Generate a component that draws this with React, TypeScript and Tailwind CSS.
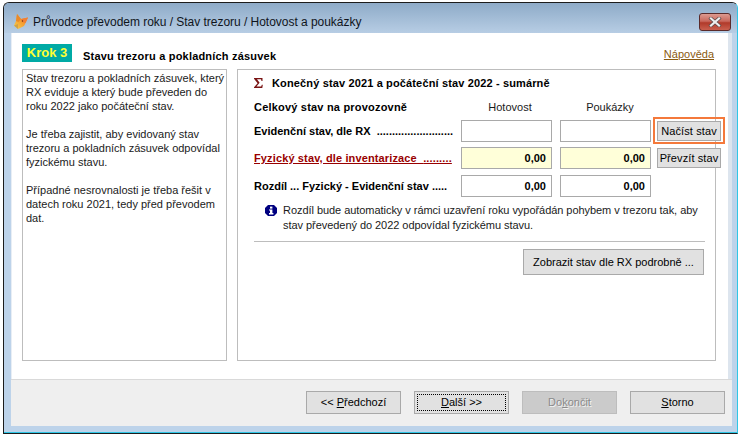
import type { ReactNode } from 'react';

const sans = 'font-["Liberation_Sans",Arial,sans-serif]';

function FoxIcon() {
  return (
    <svg width="16" height="17" viewBox="0 0 16 17" className="shrink-0">
      <defs>
        <linearGradient id="fox" x1="0" y1="1" x2="1" y2="0">
          <stop offset="0" stopColor="#f7d24e" />
          <stop offset="0.55" stopColor="#f59a2e" />
          <stop offset="1" stopColor="#ee7a28" />
        </linearGradient>
      </defs>
      <path d="M4 1 L8 6 L15 4.5 L12.5 10 L11 13 L5 16 L1 12.5 L3 8 Z" fill="url(#fox)" />
      <path d="M4 1 L8 6 L5.5 9 L3 8 Z" fill="#e98a2a" />
      <path d="M8 6 L15 4.5 L12.5 10 L9 9 Z" fill="#f27f34" />
      <circle cx="9.5" cy="8" r="0.7" fill="#6b3410" />
      <path d="M1 12.5 L5 11 L5 16 Z" fill="#cfa24a" />
    </svg>
  );
}

function CloseButton() {
  return (
    <div className="flex h-[18px] w-[32px] shrink-0 items-center justify-center rounded-[3px] border border-[#5a2a2a] bg-[linear-gradient(#dc9a90_0%,#c9685c_45%,#b13a2a_55%,#c9604f_100%)]">
      <svg width="14" height="10" viewBox="0 0 14 10">
        <path d="M3 1.5 L11 8.5 M11 1.5 L3 8.5" stroke="#5c4a4a" strokeWidth="3.6" strokeLinecap="square" />
        <path d="M3 1.5 L11 8.5 M11 1.5 L3 8.5" stroke="#eeeeee" strokeWidth="2.2" strokeLinecap="square" />
      </svg>
    </div>
  );
}

function ValueBox({ value, yellow }: { value?: string; yellow?: boolean }) {
  return (
    <div
      className={`flex h-[22px] w-[91px] shrink-0 items-center justify-end border border-[#a9a9a9] pr-[5px] text-[11px] font-bold text-black ${
        yellow ? 'bg-[#ffffd9]' : 'bg-white'
      }`}
    >
      {value}
    </div>
  );
}

function SmallButton({ label }: { label: string }) {
  return (
    <div className="flex h-[20px] w-[64px] items-center justify-center border border-[#a9a9a9] bg-[#e1e1e1] text-[11px] tracking-[0.1px] text-black">
      {label}
    </div>
  );
}

function FooterButton({ children, disabled, focused }: { children: ReactNode; disabled?: boolean; focused?: boolean }) {
  return (
    <div
      className={`flex h-[23px] w-[95px] items-center justify-center border text-[11px] ${
        disabled ? 'border-[#bdbdbd] bg-[#cbcbcb] text-[#8a8a8a] [text-shadow:1px_1px_0_#f2f2f2]' : 'border-[#a9a9a9] bg-[#e1e1e1] text-black'
      }`}
    >
      <div className={`flex h-[17px] w-[89px] items-center justify-center ${focused ? 'border border-dotted border-black' : ''}`}>
        <span>{children}</span>
      </div>
    </div>
  );
}

function Row({ label, dots, red, value, yellow, button }: { label: string; dots: string; red?: boolean; value?: string; yellow?: boolean; button?: ReactNode }) {
  return (
    <div className="flex h-[22px] items-center">
      <div className={`w-[207px] shrink-0 whitespace-pre text-[11px] font-bold ${red ? 'tracking-[0.13px] text-[#990000] underline' : 'text-black'}`}>
        {label}
        {dots}
      </div>
      <ValueBox value={value} yellow={yellow} />
      <div className="w-[8px] shrink-0" />
      <ValueBox value={value} yellow={yellow} />
      {button}
    </div>
  );
}

export default function App() {
  return (
    <div className={`${sans} h-[437px] w-[739px] bg-white pl-[3px] pt-[2px] antialiased`}>
      <div className="flex h-[432px] w-[735px] flex-col rounded-t-[6px] border border-[#1c1c1c] border-r-[#2fc6e6] bg-[#bdd3ea]">
        <div className="flex h-[30px] shrink-0 items-center rounded-t-[5px] bg-[linear-gradient(#8eabc8,#b7cde4)] pl-[9px] pr-[6px] pt-[7px]">
          <FoxIcon />
          <span className="ml-[4px] mt-[1px] flex-1 text-[12px] tracking-[-0.03px] text-[#10151c]">Průvodce převodem roku / Stav trezoru / Hotovost a poukázky</span>
          <CloseButton />
        </div>
        <div className="ml-[7px] mr-[5px] flex min-h-0 flex-1 flex-col">
          <div className="flex h-[346px] flex-col border-l border-r-4 border-l-[#e8eef5] border-r-[#dde5ee] bg-white pl-[10px] pr-[12px]">
            <div className="flex h-[36px] shrink-0">
              <div className="mt-[11px] flex h-[18px] w-[50px] items-center justify-center bg-[#00aaa5] text-[13px] font-bold text-[#ffff33]">Krok 3</div>
              <div className="mt-[15px] ml-[11px] flex-1 text-[11px] font-bold tracking-[0.2px] text-black">Stavu trezoru a pokladních zásuvek</div>
              <a className="mt-[13px] mr-[2px] text-[11px] text-[#8a5a10] underline">Nápověda</a>
            </div>
            <div className="flex min-h-0 flex-1 gap-[10px] pb-[18px]">
              <div className="h-full w-[205px] shrink-0 border border-[#bdbdbd] pl-[3px] pt-[1px] text-[11px] leading-[14px] text-[#1a1a1a]">
                <p>Stav trezoru a pokladních zásuvek, který RX eviduje a který bude převeden do roku 2022 jako počáteční stav.</p>
                <p className="mt-[14px]">Je třeba zajistit, aby evidovaný stav trezoru a pokladních zásuvek odpovídal fyzickému stavu.</p>
                <p className="mt-[14px]">Případné nesrovnalosti je třeba řešit v datech roku 2021, tedy před převodem dat.</p>
              </div>
              <div className="h-full min-w-0 flex-1 border border-[#bdbdbd] pl-[16px]">
                <div className="flex h-[21px] items-end text-[11px] font-bold tracking-[0.14px] text-black">
                  <svg width="9" height="10" viewBox="0 0 9 10" className="mb-[3px] mr-[9px] shrink-0">
                    <path d="M0 0 H8.5 V3 H7.5 L7 1.3 H3 L5.6 4.8 L2.5 8.4 H7.2 L7.8 6.8 H8.8 L8.3 10 H0 V9.3 L3.6 5.2 L0 0.7 Z" fill="#7a1414" />
                  </svg>
                  <span>Konečný stav 2021 a počáteční stav 2022 - sumárně</span>
                </div>
                <div className="mt-[8px] flex h-[16px] items-center text-[11px]">
                  <span className="w-[207px] shrink-0 font-bold tracking-[0.2px] text-black">Celkový stav na provozovně</span>
                  <span className="w-[91px] shrink-0 pl-[7px] text-center text-[#1a1a1a]">Hotovost</span>
                  <span className="w-[8px] shrink-0" />
                  <span className="w-[91px] shrink-0 pl-[9px] text-center text-[#1a1a1a]">Poukázky</span>
                </div>
                <div className="mt-[5px] flex flex-col">
                  <Row
                    label="Evidenční stav, dle RX  "
                    dots="........................."
                    button={
                      <div className="relative ml-[6px] shrink-0">
                        <SmallButton label="Načíst stav" />
                        <div className="absolute -inset-x-[4px] -top-[4px] -bottom-[3px] border-2 border-[#f4793b]" />
                      </div>
                    }
                  />
                  <div className="mt-[5px]">
                    <Row label="Fyzický stav, dle inventarizace  " dots="........." red value="0,00" yellow button={<div className="ml-[6px] shrink-0"><SmallButton label="Převzít stav" /></div>} />
                  </div>
                  <div className="mt-[6px]">
                    <Row label="Rozdíl ... Fyzický - Evidenční stav ....." dots="" value="0,00" />
                  </div>
                </div>
                <div className="mt-[6px] flex pl-[11px] text-[11px] leading-[15px] tracking-[-0.05px] text-[#1a1a1a]">
                  <svg width="12" height="11" viewBox="0 0 12 11" className="mt-[2px] shrink-0">
                    <path d="M3 0 H9 L12 3 V8 L9 11 H3 L0 8 V3 Z" fill="#000080" />
                    <rect x="5" y="1.6" width="2.4" height="2" fill="#fff" />
                    <path d="M4 4.4 H7.4 V8 H8.4 V9.4 H4 V8 H5 V5.6 H4 Z" fill="#fff" />
                  </svg>
                  <p className="ml-[6px] w-[425px]">Rozdíl bude automaticky v rámci uzavření roku vypořádán pohybem v trezoru tak, aby stav převedený do 2022 odpovídal fyzickému stavu.</p>
                </div>
                <div className="mt-[8px] mr-[10px] h-px bg-[#bdbdbd]" />
                <div className="mt-[7px] mr-[11px] flex justify-end">
                  <div className="flex h-[26px] w-[181px] items-center justify-center border border-[#a9a9a9] bg-[#e1e1e1] text-[11px] text-black">Zobrazit stav dle RX podrobně ...</div>
                </div>
              </div>
            </div>
          </div>
          <div className="flex h-[47px] shrink-0 items-start justify-end gap-[13px] border-t border-[#d9d9d9] bg-[#efefef] pr-[7px] pt-[11px]">
            <FooterButton>&lt;&lt; <span className="underline">P</span>ředchozí</FooterButton>
            <FooterButton focused><span className="underline">D</span>alší &gt;&gt;</FooterButton>
            <FooterButton disabled>Do<span className="underline">k</span>ončit</FooterButton>
            <FooterButton><span className="underline">S</span>torno</FooterButton>
          </div>
        </div>
        <div className="mt-auto h-px bg-[#2fc6e6]" />
      </div>
    </div>
  );
}
